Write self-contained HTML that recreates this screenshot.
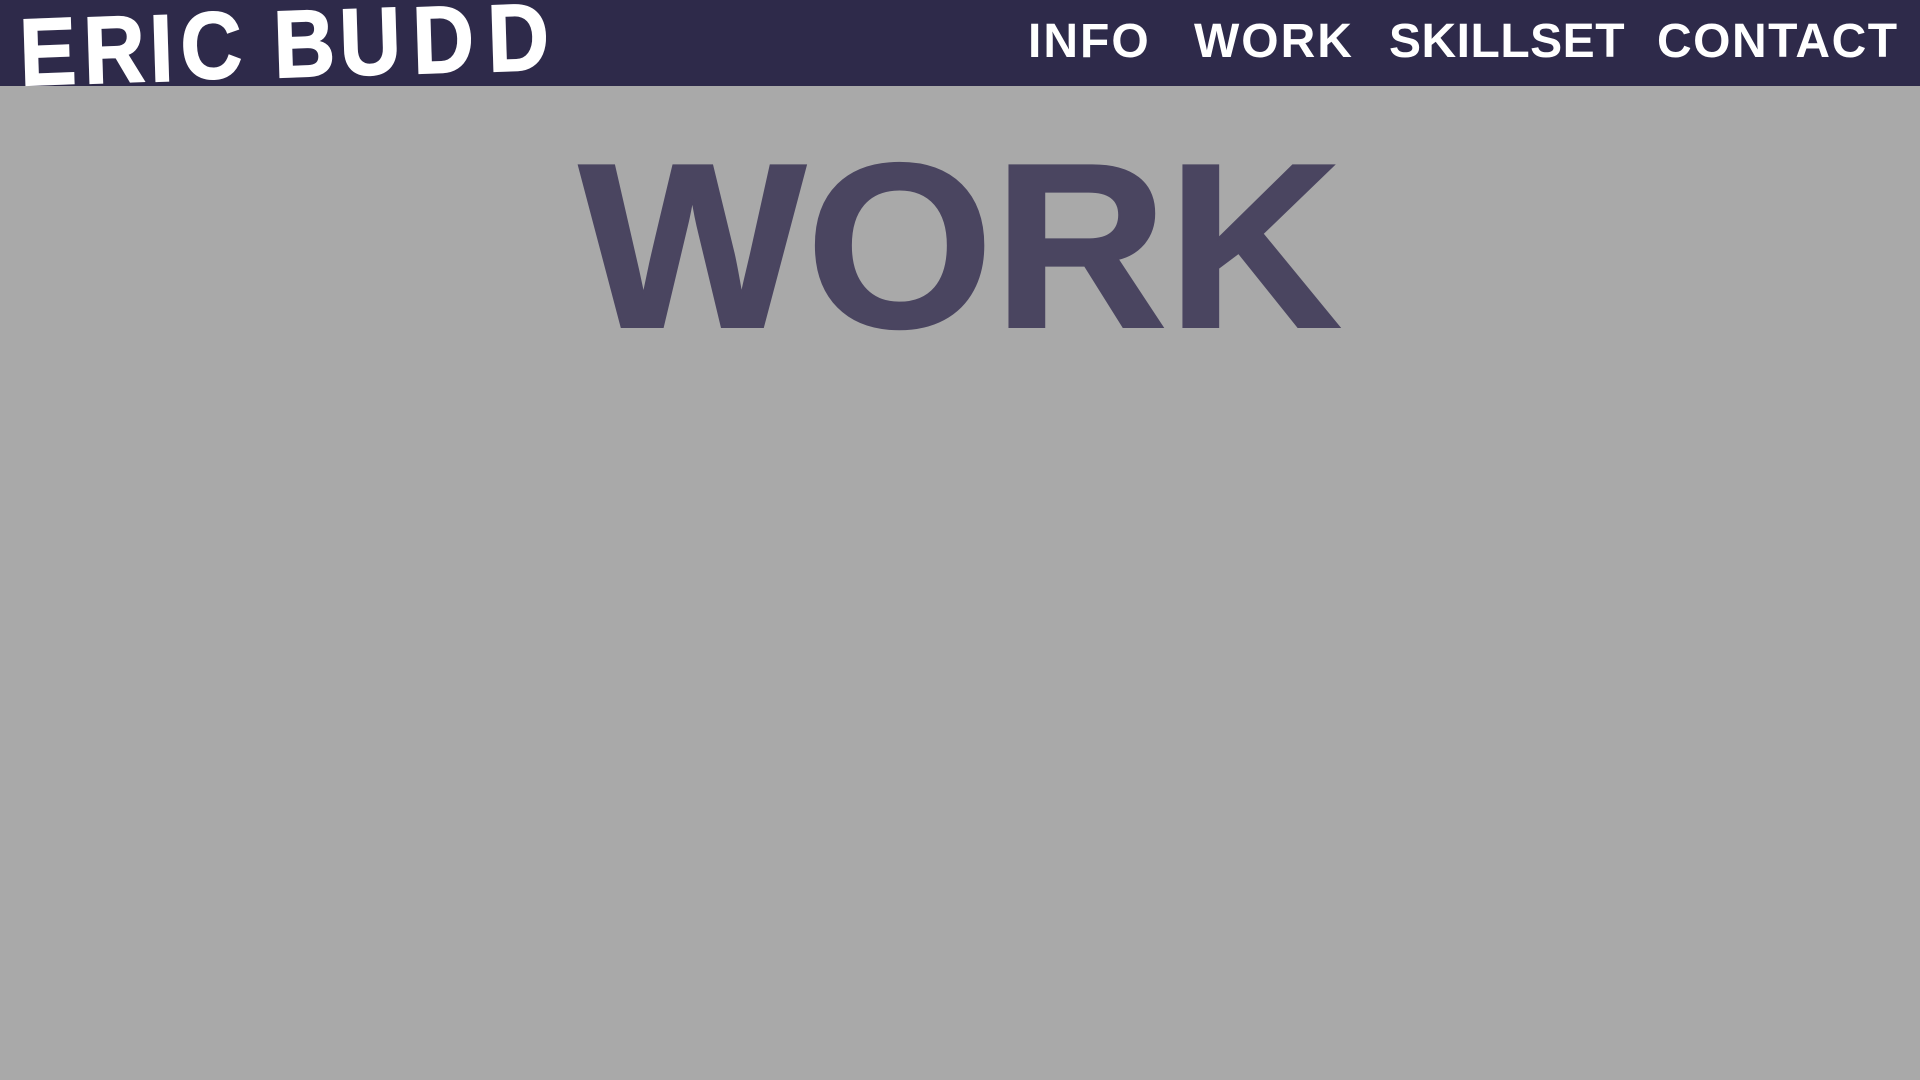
<!DOCTYPE html>
<html><head><style>
html,body{margin:0;padding:0;width:1920px;height:1080px;background:#a9a9a9;overflow:hidden;font-family:"Liberation Sans",Arial,sans-serif;}
.hdr{position:absolute;left:0;top:0;width:1920px;height:86px;background:#2e2a4a;}
.l{position:absolute;color:#fff;font-weight:bold;font-size:85px;line-height:1;transform-origin:left top;-webkit-text-stroke:1.5px #fff;}
.nav{position:absolute;top:18px;color:#fff;font-weight:bold;font-size:48px;line-height:1;letter-spacing:2px;}
.big{position:absolute;left:0;width:1920px;top:128px;text-align:center;color:#4a4560;font-weight:bold;font-size:235px;line-height:1;letter-spacing:0;transform:scaleX(1.025);-webkit-text-stroke:2px #4a4560;}
</style></head><body>
<div class="hdr">
<span class="l" style="left:18px;top:6px;transform:scaleY(1.12) rotate(-2deg)">E</span>
<span class="l" style="left:82px;top:4px;transform:scaleY(1.12) rotate(-2deg)">R</span>
<span class="l" style="left:148px;top:2px;transform:scaleY(1.12) rotate(-2deg)">I</span>
<span class="l" style="left:179px;top:0px;transform:scaleY(1.12) rotate(-2deg)">C</span>
<span class="l" style="left:272px;top:-2px;transform:scaleY(1.12) rotate(-2deg)">B</span>
<span class="l" style="left:338px;top:-4px;transform:scaleY(1.12) rotate(-2deg)">U</span>
<span class="l" style="left:411px;top:-6px;transform:scaleY(1.12) rotate(-2deg)">D</span>
<span class="l" style="left:486px;top:-8px;transform:scaleY(1.12) rotate(-2deg)">D</span>
<span class="nav" style="left:1028px">INFO</span>
<span class="nav" style="left:1194px">WORK</span>
<span class="nav" style="left:1389px;letter-spacing:0.5px">SKILLSET</span>
<span class="nav" style="left:1657px;letter-spacing:1.5px">CONTACT</span>
</div>
<div class="big">WORK</div>
</body></html>
